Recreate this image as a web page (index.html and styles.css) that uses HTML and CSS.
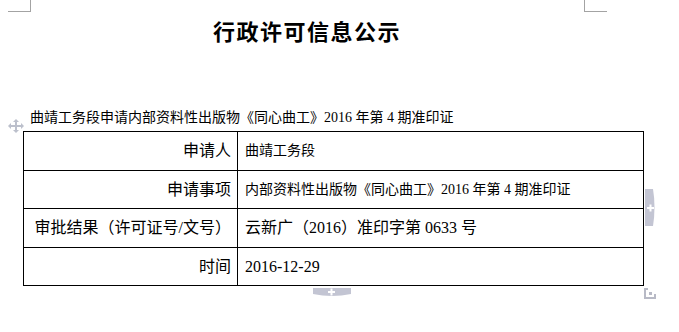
FILE: index.html
```html
<!DOCTYPE html>
<html lang="zh-CN">
<head>
<meta charset="utf-8">
<title>行政许可信息公示</title>
<link rel="stylesheet" href="styles.css">
</head>
<body>
<div class="sheet">
  <span class="crop crop-left"></span>
  <span class="crop crop-right"></span>
  <div class="page">
    <h1 class="title">行政许可信息公示</h1>
    <p class="subtitle">曲靖工务段申请内部资料性出版物《同心曲工》2016 年第 4 期准印证</p>
  </div>
  <div class="table-wrap">
    <svg class="move-handle" width="16" height="14" viewBox="0 0 16 14" aria-hidden="true">
      <g fill="#bcc0cc">
        <rect x="7" y="2" width="2" height="10"/>
        <rect x="2" y="6" width="12" height="2"/>
        <polygon points="8,0 5,3 11,3"/>
        <polygon points="8,14 5,11 11,11"/>
        <polygon points="0,7 3,4 3,10"/>
        <polygon points="16,7 13,4 13,10"/>
      </g>
    </svg>
    <table class="info">
      <tr>
        <td class="label">申请人</td>
        <td class="value small">曲靖工务段</td>
      </tr>
      <tr>
        <td class="label">申请事项</td>
        <td class="value small">内部资料性出版物《同心曲工》2016 年第 4 期准印证</td>
      </tr>
      <tr>
        <td class="label">审批结果（许可证号/文号）</td>
        <td class="value">云新广（2016）准印字第 0633 号</td>
      </tr>
      <tr>
        <td class="label">时间</td>
        <td class="value">2016-12-29</td>
      </tr>
    </table>
    <svg class="add-col" width="11" height="37" viewBox="0 0 11 37" aria-hidden="true">
      <path d="M0 0 H8 Q11 18 8 37 H0 Z" fill="#c3c5d3"/>
      <rect x="2" y="18" width="7" height="2" fill="#fff"/>
      <rect x="4.5" y="15.5" width="2" height="7" fill="#fff"/>
    </svg>
    <svg class="add-row" width="38" height="9" viewBox="0 0 38 9" aria-hidden="true">
      <path d="M0 0 H38 V6 Q19 10 0 6 Z" fill="#c3c5d3"/>
      <rect x="15" y="3" width="7" height="2" fill="#fff"/>
      <rect x="17.5" y="0.5" width="2" height="7" fill="#fff"/>
    </svg>
    <svg class="resize" width="12" height="11" viewBox="0 0 12 11" aria-hidden="true">
      <path d="M0 0 H4 V2 H2 V9 H10 V6 H12 V11 H0 Z" fill="#b8bac6"/>
      <rect x="5" y="4" width="3" height="3" fill="#b8bac6"/>
    </svg>
  </div>
</div>
</body>
</html>
```

FILE: styles.css
```css
html, body {
  margin: 0;
  padding: 0;
  background: #ffffff;
}

.sheet {
  position: relative;
  width: 679px;
  height: 332px;
  overflow: hidden;
  font-family: "Liberation Serif", "Noto Sans CJK SC", sans-serif;
  color: #000;
}

.crop {
  position: absolute;
  top: 0;
  width: 22px;
  height: 11px;
  border-bottom: 1px solid #a3a3a3;
}

.crop-left {
  left: 8px;
  border-right: 1px solid #a3a3a3;
}

.crop-right {
  left: 584px;
  border-left: 1px solid #a3a3a3;
}

.page {
  width: 554px;
  padding-left: 30px;
  padding-top: 16px;
}

.title {
  margin: 0;
  height: 28px;
  line-height: 28px;
  text-align: center;
  font-family: "Noto Sans CJK SC", sans-serif;
  font-size: 22px;
  font-weight: 700;
  letter-spacing: 1.5px;
}

.subtitle {
  margin: 64px 0 0 0;
  height: 20px;
  line-height: 20px;
  font-size: 14px;
  white-space: nowrap;
}

.table-wrap {
  position: relative;
  margin-left: 23px;
  margin-top: 3px;
  width: 621px;
}

.info {
  border-collapse: collapse;
  width: 621px;
  table-layout: fixed;
}

.info td {
  border: 1px solid #000;
  height: 37px;
  padding: 0;
  font-size: 16px;
  line-height: 20px;
  white-space: nowrap;
}

.info tr:nth-child(odd) td {
  height: 38px;
}

.info .label {
  width: 207px;
  text-align: right;
  padding-right: 6px;
}

.info .value {
  padding-left: 7px;
}

.info .small {
  font-size: 14px;
}

.move-handle {
  position: absolute;
  left: -15px;
  top: -12px;
}

.add-col {
  position: absolute;
  left: 622px;
  top: 58px;
}

.add-row {
  position: absolute;
  left: 290px;
  top: 157px;
}

.resize {
  position: absolute;
  left: 621px;
  top: 157px;
}
```
